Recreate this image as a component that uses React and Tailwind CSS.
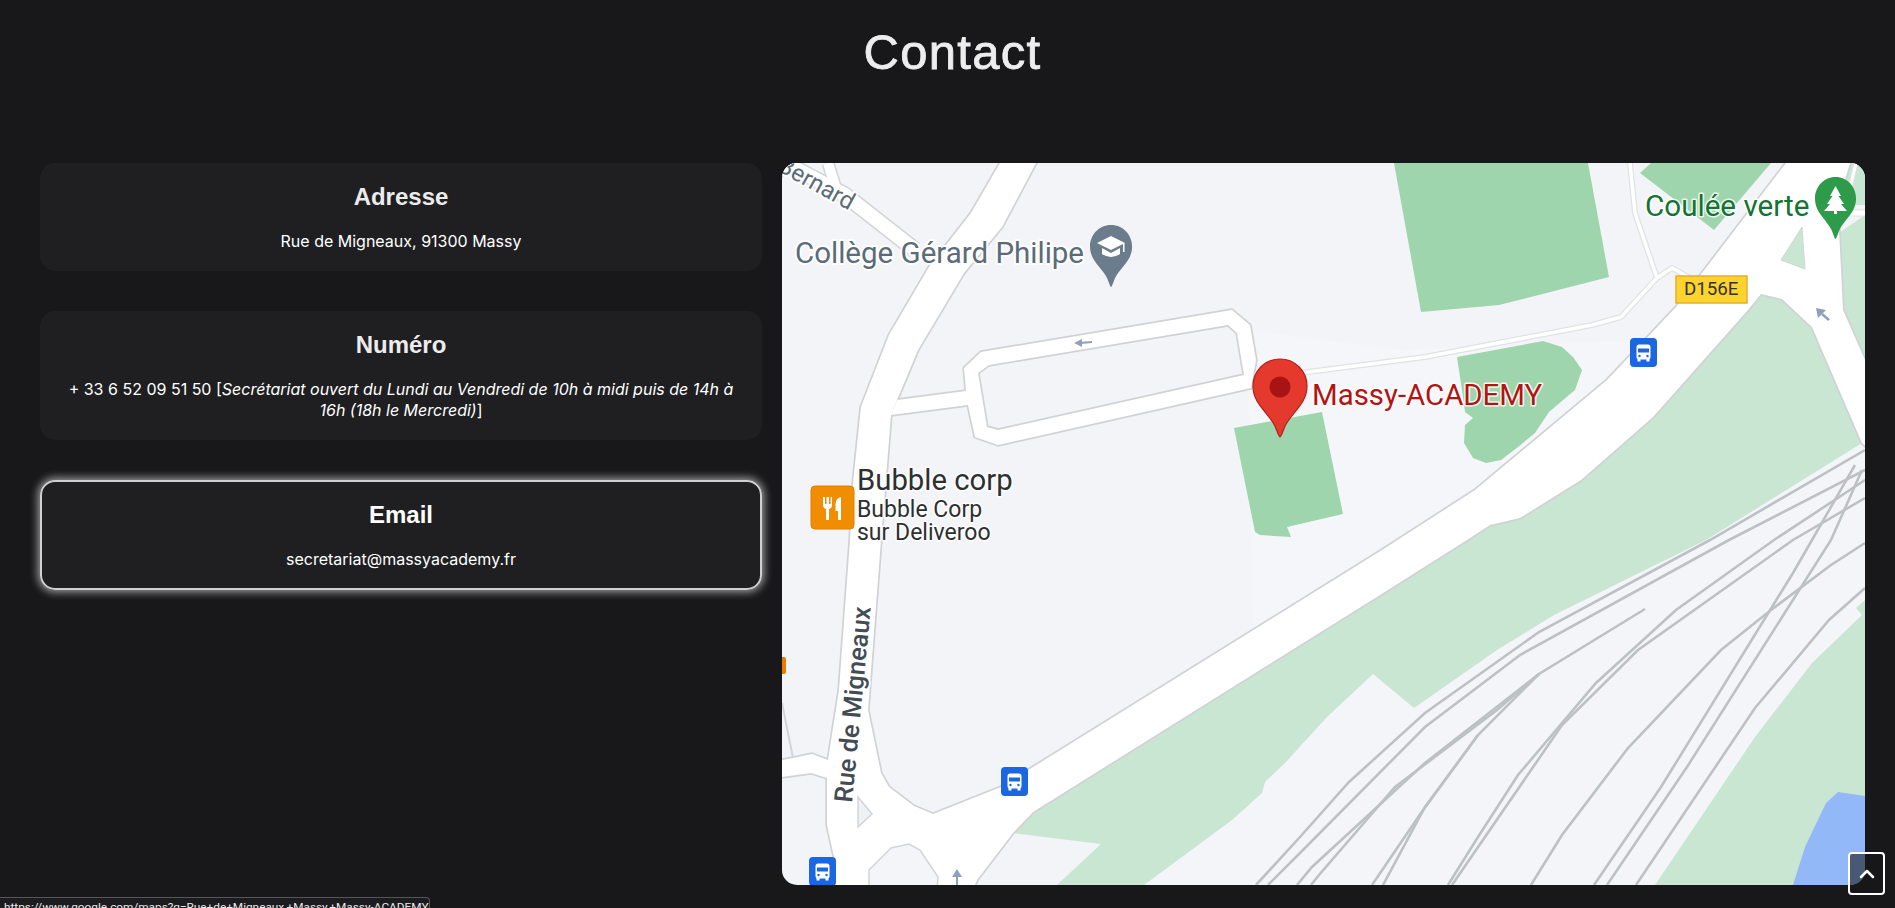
import React from 'react';
import { ChevronUp } from 'lucide-react';

const cardBase = 'rounded-[15px] bg-[#1f1f22] px-5 text-center';
const headingCls = "font-['Liberation_Sans',sans-serif] text-2xl font-bold leading-[27px] mb-[21px]";
const bodyCls = "font-['Inter',sans-serif] text-base leading-[20.8px]";

const RAILS = [
  '1865,450 1710,540 1539,632 1425,713 1349,782 1300,837 1256,885',
  '1865,470 1729,540 1520,655 1425,727 1300,853 1268,885',
  '1645,609 1539,674 1478,735 1421,813 1372,885',
  '1539,674 1425,763 1312,867 1297,885',
  '1478,735 1425,807 1383,885',
  '1539,674 1497,710 1395,787 1319,875 1311,885',
  '1865,480 1774,540 1676,610 1596,683 1518,775 1478,837 1448,885',
  '1865,498 1793,540 1638,650 1562,725 1452,885',
  '1865,543 1831,565 1771,610 1721,650 1628,748 1562,835 1531,885',
  '1855,465 1812,540 1793,573 1661,787 1594,885',
  '1862,470 1831,540 1687,767 1607,885',
  '1865,588 1829,620 1755,708 1636,885',
];

const ROAD_MAIN =
  '1000,163 971,213 929,267 889,335 861,407 853,483 850,540 839,690 828,760 812,754 793,758 782,760 782,777 811,773 827,778 827,825 834,857 835,885 975,885 977,880 1013,833 1033,812 1380,595 1467,540 1490,525 1520,518 1581,480 1653,417 1748,310 1761,294 1782,299 1812,327 1862,443 1870,450 1870,372 1865,360 1843,310 1839,230 1839,200 1850,163 1786,163 1702,273 1676,307 1626,360 1607,380 1475,490 1382,550 1033,767 1001,787 933,814 914,806 889,787 881,773 868,710 881,540 891,415 897,400 918,350 964,273 1002,227 1036,163';
const ROAD_LOOP =
  'M891 415L968 405L975 437L998 445L1251 388L1256 360L1250 325L1232 310L981 352L964 368L966 391L897 400ZM978 373L987 427L998 430L1244 375L1237 333L1228 325L989 365Z';

const PIN = 'M27 0C11 0 0 13 0 27C0 45 15 53 22 67C24 72 26 78 27 78C28 78 30 72 32 67C39 53 54 45 54 27C54 13 43 0 27 0Z';

const Label = ({ x, y, size, color, children, transform, halo = 4, weight = 400 }) => (
  <text
    x={x}
    y={y}
    fontSize={size}
    fontWeight={weight}
    fill={color}
    fontFamily="Roboto, sans-serif"
    stroke="#ffffff"
    strokeOpacity="0.85"
    strokeWidth={halo}
    strokeLinejoin="round"
    paintOrder="stroke"
    transform={transform}
  >
    {children}
  </text>
);

const Bus = ({ x, y }) => (
  <g transform={`translate(${x} ${y})`}>
    <rect x="0" y="0" width="27" height="29" rx="4" fill="#1a66e3" />
    <rect x="6.5" y="6.5" width="14" height="15" rx="2.5" fill="#ffffff" />
    <rect x="8" y="10.5" width="11" height="4" fill="#1a66e3" />
    <circle cx="9.5" cy="18" r="1.2" fill="#1a66e3" />
    <circle cx="17.5" cy="18" r="1.2" fill="#1a66e3" />
    <rect x="7.5" y="21" width="3" height="2.5" fill="#ffffff" />
    <rect x="16.5" y="21" width="3" height="2.5" fill="#ffffff" />
  </g>
);

const MapPicture = () => (
  <svg viewBox="782 163 1083 722" className="block w-full h-full">
    <rect x="782" y="163" width="1083" height="722" fill="#f3f4f8" />
    <polygon points="1247,330 1253,627 1400,545 1600,395 1640,340 1400,350" fill="#f5f6f9" />

    {/* parks */}
    <polygon points="1394,163 1421,312 1499,305 1609,277 1588,163" fill="#9fd5ac" />
    <polygon points="1640,173 1714,230 1771,163 1651,163" fill="#9fd5ac" />
    <polygon points="1457,357 1543,341 1562,347 1573,357 1582,370 1575,390 1549,412 1535,433 1518,447 1501,460 1486,463 1473,458 1464,443 1465,425 1473,418 1465,412 1463,397" fill="#9fd5ac" />
    <polygon points="1234,428 1322,412 1343,514 1287,527 1291,537 1260,535 1255,532" fill="#9fd5ac" />

    <polygon points="1013,833 1033,812 1380,595 1467,540 1490,525 1520,518 1581,480 1653,417 1748,310 1761,294 1782,299 1812,327 1865,443 1865,885 1057,885 1101,844" fill="#c8e6d1" />
    <polygon points="1862,443 1865,445 1865,600 1856,608 1862,615 1812,663 1755,737 1655,885 1144,885 1232,820 1262,793 1265,782 1285,763 1327,717 1373,674 1414,708 1497,650 1554,615 1706,540" fill="#f4f5f8" />
    <polygon points="1839,233 1843,310 1865,360 1865,215" fill="#c8e6d1" />
    <polygon points="1846,163 1865,163 1865,205 1838,205" fill="#c8e6d1" />
    <polygon points="1793,885 1805,847 1826,803 1838,792 1865,796 1865,885" fill="#93b8f8" />

    {RAILS.map((pts) => (
      <polyline key={pts} points={pts} fill="none" stroke="#bcc1c5" strokeWidth="2.6" />
    ))}

    {/* small roads */}
    <g fill="none" strokeLinejoin="round">
      <polyline points="1256,376 1308,372 1425,357 1592,325 1621,317 1657,278 1672,268 1690,278" stroke="#e0e2e6" strokeWidth="6" />
      <polyline points="1657,278 1635,213 1630,163" stroke="#e0e2e6" strokeWidth="6" />
      <polyline points="1838,213 1865,213" stroke="#e0e2e6" strokeWidth="7" />
      <polyline points="1856,163 1846,205" stroke="#e0e2e6" strokeWidth="5" />
      <polyline points="785,163 845,195 915,250" stroke="#d2d4d8" strokeWidth="17" />
      <polyline points="828,163 838,195" stroke="#d2d4d8" strokeWidth="13" />
      <polyline points="782,703 793,758" stroke="#d2d4d8" strokeWidth="2" />
      <polyline points="1256,376 1308,372 1425,357 1592,325 1621,317 1657,278 1672,268 1690,278" stroke="#ffffff" strokeWidth="3.5" />
      <polyline points="1657,278 1635,213 1630,163" stroke="#ffffff" strokeWidth="3.5" />
      <polyline points="1838,213 1865,213" stroke="#ffffff" strokeWidth="5" />
      <polyline points="1856,163 1846,205" stroke="#ffffff" strokeWidth="3" />
      <polyline points="785,163 845,195 915,250" stroke="#ffffff" strokeWidth="14" />
      <polyline points="828,163 838,195" stroke="#ffffff" strokeWidth="10" />
    </g>

    {/* main roads: casing first, then the white fill over it */}
    <g stroke="#d0d2d6" strokeWidth="3.4" strokeLinejoin="round" fill="#ffffff">
      <polygon points={ROAD_MAIN} />
      <path d={ROAD_LOOP} fillRule="evenodd" />
    </g>
    <g fill="#ffffff">
      <polygon points={ROAD_MAIN} />
      <path d={ROAD_LOOP} fillRule="evenodd" />
    </g>

    {/* islands */}
    <polygon points="869,890 869,870 891,848 909,844 920,850 938,877 937,890" fill="#f4f5f8" stroke="#d2d4d8" strokeWidth="1.5" />
    <polygon points="858,797 872,814 858,827" fill="#f0f1f5" stroke="#d2d4d8" strokeWidth="1.5" />
    <polygon points="1802,227 1781,260 1805,269" fill="#c8e6d1" stroke="#d2d4d8" strokeWidth="1" />

    {/* one way arrows */}
    <g fill="#8fa0b8" stroke="#8fa0b8">
      <polyline points="1080,343 1092,342" strokeWidth="2" />
      <polygon points="1074,343 1082,339 1082,347" strokeWidth="0" />
      <polyline points="1822,314 1829,320" strokeWidth="2.5" />
      <polygon points="1816,308 1826,310 1818,318" strokeWidth="0" />
      <polyline points="957,875 957,885" strokeWidth="2" />
      <polygon points="957,869 962,877 952,877" strokeWidth="0" />
    </g>

    <rect x="780" y="657" width="6" height="17" rx="2" fill="#e67c00" />

    <Label x="0" y="0" size={24} color="#5b6b78" transform="translate(776 170) rotate(29)">Bernard</Label>
    <Label x="0" y="0" size={25.5} color="#434c55" weight={500} transform="translate(852 803) rotate(-84.5)">Rue de Migneaux</Label>
    <Label x="795" y="263" size={29.5} color="#5b6b78">Collège Gérard Philipe</Label>

    {/* school pin */}
    <path d={PIN} fill="#6b7c8c" transform="translate(1090 225) scale(0.78 0.795)" />
    <polygon points="1111,236 1125,243 1111,250 1097,243" fill="#ffffff" />
    <path d="M1102 248L1102 254Q1111 260 1120 254L1120 248L1111 253Z" fill="#ffffff" />
    <rect x="1123" y="243" width="1.5" height="9" fill="#ffffff" />

    {/* restaurant */}
    <rect x="811" y="486" width="43" height="43" rx="4" fill="#f18d00" stroke="#e57f00" />
    <path d="M823 497L823 505Q823 508 826 509L826 520L829 520L829 509Q832 508 832 505L832 497L830.6 497L830.6 504L829 504L829 497L826.5 497L826.5 504L825 504L825 497Z" fill="#ffffff" />
    <path d="M841 497L841 520L838 520L838 511L835.5 511L835.5 504Q836 498 841 497Z" fill="#ffffff" />
    <Label x="857" y="490" size={29.3} color="#2d2f31" halo={3}>Bubble corp</Label>
    <Label x="857" y="517" size={23} color="#2d2f31" halo={3}>Bubble Corp</Label>
    <Label x="857" y="540" size={23} color="#2d2f31" halo={3}>sur Deliveroo</Label>

    {/* main marker */}
    <path d={PIN} fill="#e5392d" stroke="#b3201b" strokeWidth="1.2" transform="translate(1253 359)" />
    <circle cx="1280" cy="387" r="10.5" fill="#a81313" />
    <Label x="1312" y="405" size={29.4} color="#b31412" halo={3}>Massy-ACADEMY</Label>

    <Label x="1645" y="216" size={29.6} color="#137333" halo={3}>Coulée verte</Label>
    <path d={PIN} fill="#2e9b4a" transform="translate(1815 177) scale(0.76 0.795)" />
    <polygon points="1835.5,186 1841,196 1838.5,196 1844,204 1841,204 1847,211 1837,211 1837,214 1834,214 1834,211 1824,211 1830,204 1827,204 1832.5,196 1830,196" fill="#ffffff" />

    <rect x="1676" y="276" width="71" height="27" fill="#fdd42c" stroke="#e6ad2e" strokeWidth="1.5" />
    <text x="1684" y="295" fontSize="18.7" fill="#333333" fontFamily="Roboto, sans-serif">D156E</text>

    <Bus x={1630} y={338} />
    <Bus x={1001} y={767} />
    <Bus x={809} y={857} />
  </svg>
);

export default function App() {
  return (
    <div className="relative h-[908px] overflow-hidden bg-[#18181b] text-white">
      <h1 className="pt-[22px] pl-10 pr-[30px] text-center font-['Liberation_Sans',sans-serif] text-[49px] leading-[60px] tracking-[1.3px] text-[#ededed] [-webkit-text-stroke:0.8px_#ededed]">
        Contact
      </h1>

      <div className="mt-[81px] flex gap-5 pl-10 pr-[30px]">
        {/* left column */}
        <div className="flex w-[722px] flex-col gap-10">
          <div className={`${cardBase} pt-5 pb-[19.5px]`}>
            <h2 className={`${headingCls} text-[#ececec]`}>Adresse</h2>
            <p className={bodyCls}>Rue de Migneaux, 91300 Massy</p>
          </div>

          <div className={`${cardBase} pt-5 pb-[19.5px]`}>
            <h2 className={`${headingCls} text-[#ececec]`}>Numéro</h2>
            <p className={bodyCls}>
              + 33 6 52 09 51 50 [<em>Secrétariat ouvert du Lundi au Vendredi de 10h à midi puis de 14h à 16h (18h le Mercredi)</em>]
            </p>
          </div>

          <div className={`${cardBase} pt-[21px] pb-5 shadow-[inset_0_0_0_2px_#d0d0d0,0_0_8px_2px_rgba(255,255,255,0.6)]`}>
            <h2 className={`${headingCls} text-white`}>Email</h2>
            <p className={bodyCls}>secretariat@massyacademy.fr</p>
          </div>
        </div>

        {/* map */}
        <div className="h-[722px] w-[1083px] overflow-hidden rounded-[15px]">
          <MapPicture />
        </div>
      </div>

      {/* browser link preview */}
      <div className="absolute bottom-0 left-0 h-[11px] w-[430px] overflow-hidden whitespace-nowrap rounded-tr border-t border-r border-[#55565a] bg-[#1c1c1f] pl-1 pt-[2px] font-['Roboto',sans-serif] text-[11.8px] leading-[15px] text-[#e8e8e8]">
        https://www.google.com/maps?q=Rue+de+Migneaux,+Massy,+Massy-ACADEMY
      </div>

      {/* back to top */}
      <button className="absolute bottom-[13px] right-[10px] flex h-[43px] w-[37px] items-center justify-center rounded border-2 border-white bg-[#18181b]/60 text-white">
        <ChevronUp size={24} strokeWidth={2.5} />
      </button>
    </div>
  );
}
